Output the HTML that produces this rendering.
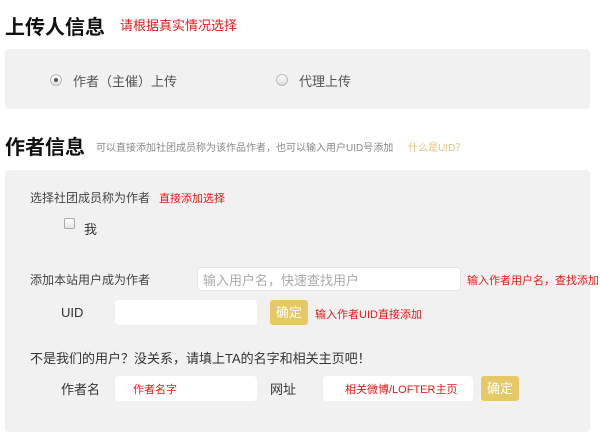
<!DOCTYPE html>
<html><head><meta charset="utf-8"><style>
*{margin:0;padding:0;box-sizing:border-box}
body{width:600px;height:434px;background:#fff;font-family:"Liberation Sans","Noto Sans CJK SC",sans-serif;position:relative;overflow:hidden;color:#333}
.a{position:absolute;white-space:nowrap}
.h{font-size:20px;font-weight:bold;color:#111}
.red{color:#e21a1a}
.panel{position:absolute;background:#f1f1f1;border-radius:4px}
.inp{position:absolute;background:#fff;border-radius:4px;border:1px solid #e6e6e6}
.btn{position:absolute;background:#e4c966;color:#fff;border-radius:3px;font-size:13px;text-align:center}
.radio{position:absolute;width:12px;height:12px;border-radius:50%;border:1px solid #bbb;background:linear-gradient(#fff,#ddd)}
</style></head><body>
<div class="a h" style="left:5px;top:11px">上传人信息</div>
<div class="a red" style="left:120px;top:15px;font-size:13px">请根据真实情况选择</div>
<div class="panel" style="left:5px;top:49px;width:585px;height:60px"></div>
<div class="radio" style="left:50px;top:74px"><div style="position:absolute;left:3px;top:3px;width:4px;height:4px;border-radius:50%;background:#555"></div></div>
<div class="a" style="left:73px;top:71px;font-size:13px;color:#555">作者（主催）上传</div>
<div class="radio" style="left:276px;top:74px"></div>
<div class="a" style="left:299px;top:71px;font-size:13px;color:#555">代理上传</div>

<div class="a h" style="left:5px;top:131px">作者信息</div>
<div class="a" style="left:96px;top:139px;font-size:10px;color:#888">可以直接添加社团成员称为该作品作者，也可以输入用户UID号添加</div>
<div class="a" style="left:408px;top:139px;font-size:10px;color:#e0c27a">什么是UID？</div>
<div class="panel" style="left:5px;top:170px;width:585px;height:262px"></div>
<div class="a" style="left:30px;top:189px;font-size:12px;color:#444">选择社团成员称为作者</div>
<div class="a red" style="left:159px;top:190px;font-size:11px">直接添加选择</div>
<div style="position:absolute;left:64px;top:218px;width:11px;height:11px;border:1px solid #aaa;border-radius:2px;background:linear-gradient(#fff,#e4e4e4)"></div>
<div class="a" style="left:84px;top:219px;font-size:13px;color:#333">我</div>

<div class="a" style="left:30px;top:271px;font-size:12px;color:#444">添加本站用户成为作者</div>
<div class="inp" style="left:197px;top:267px;width:264px;height:24px"></div>
<div class="a" style="left:203px;top:270px;font-size:13px;color:#aaa">输入用户名，快速查找用户</div>
<div class="a red" style="left:467px;top:272px;font-size:11px">输入作者用户名，查找添加</div>

<div class="a" style="left:61px;top:305px;font-size:13px;color:#333">UID</div>
<div class="inp" style="left:115px;top:300px;width:142px;height:25px;border:none"></div>
<div class="btn" style="left:270px;top:300px;width:38px;height:25px;line-height:25px">确定</div>
<div class="a red" style="left:315px;top:306px;font-size:11px">输入作者UID直接添加</div>

<div class="a" style="left:30px;top:348px;font-size:13px;color:#333">不是我们的用户？没关系，请填上TA的名字和相关主页吧！</div>
<div class="a" style="left:61px;top:379px;font-size:13px;color:#333">作者名</div>
<div class="inp" style="left:115px;top:376px;width:142px;height:25px;border:none"></div>
<div class="a red" style="left:133px;top:381px;font-size:11px">作者名字</div>
<div class="a" style="left:270px;top:379px;font-size:13px;color:#333">网址</div>
<div class="inp" style="left:323px;top:376px;width:150px;height:25px;border:none"></div>
<div class="a red" style="left:345px;top:381px;font-size:11px">相关微博/LOFTER主页</div>
<div class="btn" style="left:481px;top:376px;width:38px;height:25px;line-height:25px">确定</div>
</body></html>
